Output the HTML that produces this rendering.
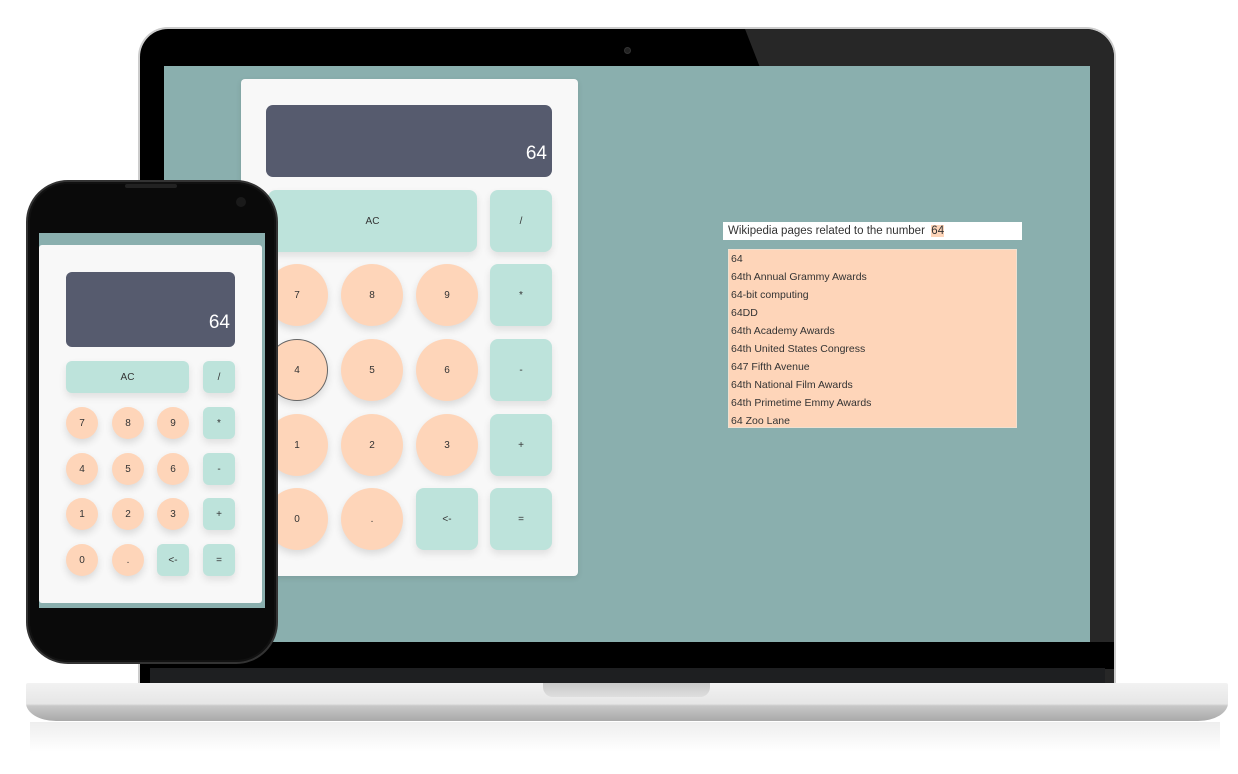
<!DOCTYPE html>
<html><head><style>
*{margin:0;padding:0;box-sizing:border-box}
body{width:1238px;height:774px;background:#fff;position:relative;overflow:hidden;font-family:"Liberation Sans",sans-serif;color:#333}
.a{position:absolute}
.b{position:absolute;display:flex;align-items:center;justify-content:center;font-size:10px;color:#333}
.o{background:#fed5b9;border-radius:50%;box-shadow:0 4px 8px rgba(0,0,0,.12)}
.t{background:#bde3db;border-radius:8px;box-shadow:0 4px 8px rgba(0,0,0,.1)}
.wl div{height:18px;line-height:18px;font-size:10.5px;padding-left:2px;color:#333}
</style></head><body>
<!-- laptop lid -->
<div class="a" style="left:138px;top:27px;width:978px;height:660px;border-radius:30px 30px 0 0;background:#ccc"></div>
<div class="a" style="left:140px;top:29px;width:974px;height:656px;border-radius:28px 28px 0 0;background:#000;overflow:hidden">
<svg class="a" style="left:0;top:0" width="974" height="656"><polygon points="605,0 974,0 974,656 860,656" fill="#272727"/></svg>
</div>
<div class="a" style="left:140px;top:642px;width:974px;height:27px;background:#000"></div>
<div class="a" style="left:150px;top:668px;width:955px;height:16px;background:#1e1f21"></div>
<div class="a" style="left:624px;top:47px;width:7px;height:7px;border-radius:50%;background:#222;border:1px solid #333"></div>
<!-- screen -->
<div class="a" style="left:164px;top:66px;width:926px;height:576px;background:#8aafae"></div>
<!-- laptop calc -->
<div class="a" style="left:241px;top:79px;width:337px;height:497px;background:#f8f8f8;border-radius:4px;box-shadow:0 2px 6px rgba(0,0,0,.1)"></div>
<div class="a" style="left:266px;top:105px;width:286px;height:72px;background:#565b6e;border-radius:7px;color:#fff;font-size:19px;text-align:right;padding:38px 5px 0 0">64</div>
<div class="b t" style="left:268px;top:190px;width:209px;height:62px">AC</div>
<div class="b t" style="left:490px;top:190px;width:62px;height:62px">/</div>
<div class="b o" style="left:266px;top:264px;width:62px;height:62px">7</div>
<div class="b o" style="left:341px;top:264px;width:62px;height:62px">8</div>
<div class="b o" style="left:416px;top:264px;width:62px;height:62px">9</div>
<div class="b t" style="left:490px;top:264px;width:62px;height:62px">*</div>
<div class="b o" style="left:266px;top:339px;width:62px;height:62px;border:1.5px solid #666">4</div>
<div class="b o" style="left:341px;top:339px;width:62px;height:62px">5</div>
<div class="b o" style="left:416px;top:339px;width:62px;height:62px">6</div>
<div class="b t" style="left:490px;top:339px;width:62px;height:62px">-</div>
<div class="b o" style="left:266px;top:414px;width:62px;height:62px">1</div>
<div class="b o" style="left:341px;top:414px;width:62px;height:62px">2</div>
<div class="b o" style="left:416px;top:414px;width:62px;height:62px">3</div>
<div class="b t" style="left:490px;top:414px;width:62px;height:62px">+</div>
<div class="b o" style="left:266px;top:488px;width:62px;height:62px">0</div>
<div class="b o" style="left:341px;top:488px;width:62px;height:62px">.</div>
<div class="b t" style="left:416px;top:488px;width:62px;height:62px">&lt;-</div>
<div class="b t" style="left:490px;top:488px;width:62px;height:62px">=</div>
<!-- wiki -->
<div class="a" style="left:723px;top:222px;width:299px;height:18px;background:#fff;font-size:11.5px;line-height:18px;padding-left:5px;color:#333">Wikipedia pages related to the number&nbsp; <span style="background:#fed5b9">64</span></div>
<div class="a wl" style="left:728px;top:249px;width:289px;height:179px;background:#fed5b9;border:1px solid #f0e0d0">
<div>64</div><div>64th Annual Grammy Awards</div><div>64-bit computing</div><div>64DD</div><div>64th Academy Awards</div><div>64th United States Congress</div><div>647 Fifth Avenue</div><div>64th National Film Awards</div><div>64th Primetime Emmy Awards</div><div>64 Zoo Lane</div></div>
<!-- base -->
<div class="a" style="left:26px;top:683px;width:1202px;height:38px;border-radius:2px 2px 30px 30px/2px 2px 18px 18px;background:linear-gradient(#f2f2f2 0%,#e6e6e6 55%,#c8c8c8 60%,#a9a9a9 100%)"></div>
<div class="a" style="left:543px;top:683px;width:167px;height:14px;border-radius:0 0 10px 10px;background:linear-gradient(#c9c9c9,#dedede)"></div>
<div class="a" style="left:30px;top:722px;width:1190px;height:30px;background:linear-gradient(#eee,#fff)"></div>
<!-- phone -->
<div class="a" style="left:26px;top:180px;width:252px;height:484px;border-radius:42px;background:#0a0a0a;border:2px solid #333;box-shadow:inset 0 0 0 2px #111"></div>
<div class="a" style="left:125px;top:184px;width:52px;height:4px;border-radius:3px;background:#222"></div>
<div class="a" style="left:236px;top:197px;width:10px;height:10px;border-radius:50%;background:#1a1a1a"></div>
<div class="a" style="left:39px;top:233px;width:226px;height:375px;background:#8aafae"></div>
<div class="a" style="left:39px;top:245px;width:223px;height:358px;background:#f8f8f8;border-radius:3px"></div>
<div class="a" style="left:66px;top:272px;width:169px;height:75px;background:#565b6e;border-radius:6px;color:#fff;font-size:19px;text-align:right;padding:40px 5px 0 0">64</div>
<div class="b t" style="left:66px;top:361px;width:123px;height:32px;border-radius:6px">AC</div>
<div class="b t" style="left:203px;top:361px;width:32px;height:32px;border-radius:6px">/</div>
<div class="b o" style="left:66px;top:407px;width:32px;height:32px">7</div>
<div class="b o" style="left:112px;top:407px;width:32px;height:32px">8</div>
<div class="b o" style="left:157px;top:407px;width:32px;height:32px">9</div>
<div class="b t" style="left:203px;top:407px;width:32px;height:32px;border-radius:6px">*</div>
<div class="b o" style="left:66px;top:453px;width:32px;height:32px">4</div>
<div class="b o" style="left:112px;top:453px;width:32px;height:32px">5</div>
<div class="b o" style="left:157px;top:453px;width:32px;height:32px">6</div>
<div class="b t" style="left:203px;top:453px;width:32px;height:32px;border-radius:6px">-</div>
<div class="b o" style="left:66px;top:498px;width:32px;height:32px">1</div>
<div class="b o" style="left:112px;top:498px;width:32px;height:32px">2</div>
<div class="b o" style="left:157px;top:498px;width:32px;height:32px">3</div>
<div class="b t" style="left:203px;top:498px;width:32px;height:32px;border-radius:6px">+</div>
<div class="b o" style="left:66px;top:544px;width:32px;height:32px">0</div>
<div class="b o" style="left:112px;top:544px;width:32px;height:32px">.</div>
<div class="b t" style="left:157px;top:544px;width:32px;height:32px;border-radius:6px">&lt;-</div>
<div class="b t" style="left:203px;top:544px;width:32px;height:32px;border-radius:6px">=</div>
</body></html>
